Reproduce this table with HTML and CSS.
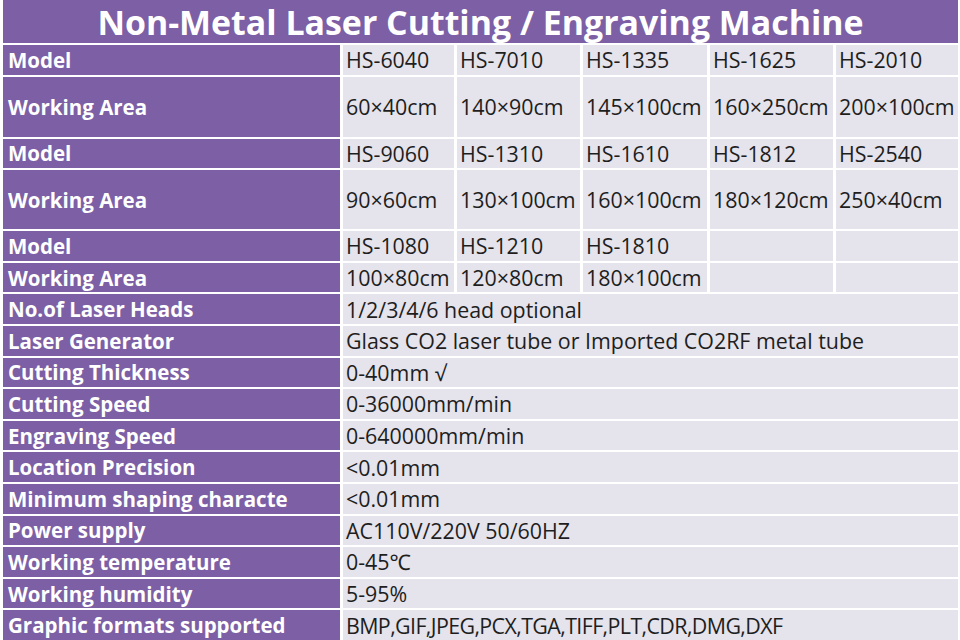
FILE: index.html
```html
<!DOCTYPE html>
<html>
<head>
<meta charset="utf-8">
<link rel="stylesheet" href="styles.css">
</head>
<body>
<div class="sheet">
  <div class="title">Non-Metal Laser Cutting / Engraving Machine</div>

  <div class="lbl">Model</div>
  <div class="val">HS-6040</div><div class="val">HS-7010</div><div class="val">HS-1335</div><div class="val">HS-1625</div><div class="val">HS-2010</div>
  <div class="lbl">Working Area</div>
  <div class="val">60×40cm</div><div class="val">140×90cm</div><div class="val">145×100cm</div><div class="val">160×250cm</div><div class="val">200×100cm</div>

  <div class="lbl">Model</div>
  <div class="val">HS-9060</div><div class="val">HS-1310</div><div class="val">HS-1610</div><div class="val">HS-1812</div><div class="val">HS-2540</div>
  <div class="lbl">Working Area</div>
  <div class="val">90×60cm</div><div class="val">130×100cm</div><div class="val">160×100cm</div><div class="val">180×120cm</div><div class="val">250×40cm</div>

  <div class="lbl">Model</div>
  <div class="val">HS-1080</div><div class="val">HS-1210</div><div class="val">HS-1810</div><div class="val"></div><div class="val"></div>
  <div class="lbl">Working Area</div>
  <div class="val">100×80cm</div><div class="val">120×80cm</div><div class="val">180×100cm</div><div class="val"></div><div class="val"></div>

  <div class="lbl">No.of Laser Heads</div><div class="val wide">1/2/3/4/6 head optional</div>
  <div class="lbl">Laser Generator</div><div class="val wide">Glass CO2 laser tube or Imported CO2RF metal tube</div>
  <div class="lbl">Cutting Thickness</div><div class="val wide">0-40mm √</div>
  <div class="lbl">Cutting Speed</div><div class="val wide">0-36000mm/min</div>
  <div class="lbl">Engraving Speed</div><div class="val wide">0-640000mm/min</div>
  <div class="lbl">Location Precision</div><div class="val wide">&lt;0.01mm</div>
  <div class="lbl">Minimum shaping characte</div><div class="val wide">&lt;0.01mm</div>
  <div class="lbl">Power supply</div><div class="val wide">AC110V/220V 50/60HZ</div>
  <div class="lbl">Working temperature</div><div class="val wide">0-45℃</div>
  <div class="lbl">Working humidity</div><div class="val wide">5-95%</div>
  <div class="lbl">Graphic formats supported</div><div class="val wide tight">BMP,GIF,JPEG,PCX,TGA,TIFF,PLT,CDR,DMG,DXF</div>
</div>
</body>
</html>
```
FILE: styles.css
```css
html, body {
  margin: 0;
  padding: 0;
  background: #ffffff;
}
body {
  width: 960px;
  height: 640px;
  overflow: hidden;
  font-family: "Open Sans", "Noto Sans", "Liberation Sans", sans-serif;
}
.sheet {
  display: grid;
  grid-template-columns: 337px 111px 123px 124px 123px 122px;
  grid-template-rows: 43px 29.6px 60px 29.6px 59px repeat(13, 29.6px);
  column-gap: 3px;
  row-gap: 2px;
  padding: 0 2px 0 3px;
}
.title {
  grid-column: 1 / -1;
  background: #7c5fa5;
  color: #ffffff;
  font-weight: 700;
  font-size: 33.9px;
  display: flex;
  align-items: center;
  justify-content: center;
  padding-top: 1px;
  white-space: nowrap;
}
.lbl {
  background: #7c5fa5;
  color: #ffffff;
  font-weight: 700;
  font-size: 20.5px;
  display: flex;
  align-items: center;
  padding-left: 5px;
  white-space: nowrap;
}
.val {
  background: #e5e3eb;
  color: #1e1e1e;
  font-size: 21.4px;
  display: flex;
  align-items: center;
  padding-left: 3px;
  white-space: nowrap;
  overflow: hidden;
}
.wide {
  grid-column: 2 / -1;
}
.tight {
  letter-spacing: -0.6px;
}
```
